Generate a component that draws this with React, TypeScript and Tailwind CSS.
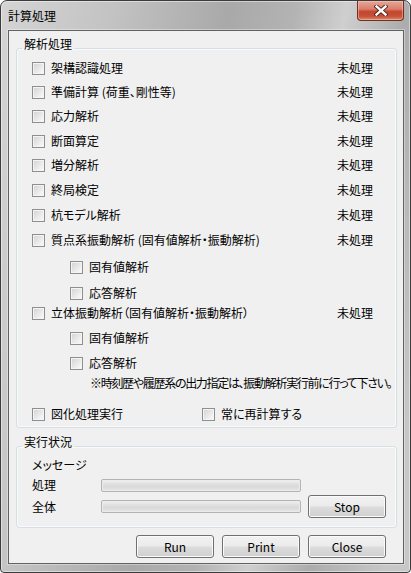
import React from 'react';

const font = "font-['Noto_Sans_CJK_JP','Noto_Sans',sans-serif] [font-feature-settings:'palt']";

function Check() {
  return (
    <span className="flex h-[13px] w-[13px] shrink-0 border border-[#8e8f8f] bg-[#f4f4f4] p-[1px]">
      <span className="flex-1 bg-[linear-gradient(135deg,#d6d6d6_0%,#e9e9e9_55%,#f9f9f9_100%)]" />
    </span>
  );
}

function Row({ label, status, mt, sub }: { label: string; status?: boolean; mt: string; sub?: boolean }) {
  return (
    <div className={`flex h-[16px] items-center pr-[23px] ${mt} ${sub ? 'pl-[53px]' : 'pl-[15px]'}`}>
      <Check />
      <span className="ml-[6px] whitespace-nowrap">{label}</span>
      {status && <span className="ml-auto">未処理</span>}
    </div>
  );
}

function Button({ label }: { label: string }) {
  return (
    <button className="h-[23px] w-[78px] shrink-0 rounded-[3px] border border-[#707070] bg-[linear-gradient(to_bottom,#f2f2f2_0%,#ebebeb_48%,#dddddd_52%,#cfcfcf_100%)] text-[12px] leading-[14px] text-black shadow-[inset_0_0_0_1px_#fbfbfb]">
      {label}
    </button>
  );
}

function Bar() {
  return (
    <div className="h-[13px] w-[200px] rounded-[2px] border border-[#b3b3b3] bg-[linear-gradient(to_bottom,#f4f4f4_0%,#e2e2e2_30%,#d9d9d9_60%,#e6e6e6_100%)] shadow-[inset_0_0_0_1px_#ececec]" />
  );
}

export default function App() {
  return (
    <div className={`${font} text-[12px] leading-[14px] text-black`}>
      <div className="flex h-[573px] w-[411px] flex-col rounded-t-[7px] rounded-b-[4px] border border-[#3c3c3c] bg-[linear-gradient(100deg,#d4d4d4_0%,#c3c3c3_22%,#a9a9a9_45%,#b3b3b3_58%,#cfcfcf_68%,#acacac_80%,#c7c7c7_95%)] shadow-[inset_0_0_0_1px_rgba(255,255,255,0.45)]">
        {/* Title bar */}
        <div className="flex h-[29px] shrink-0 items-start pl-[7px] pr-[6px]">
          <span className="mt-[8px]">計算処理</span>
          <div className="ml-auto flex h-[20px] w-[47px] items-center justify-center rounded-b-[4px] border border-t-0 border-[#6e2f25] bg-[linear-gradient(to_bottom,#e7a697_0%,#d9806d_42%,#c4462d_56%,#c6503a_80%,#dc8a66_100%)] shadow-[inset_0_0_0_1px_rgba(255,210,200,0.45)]">
            <svg width="14" height="11" viewBox="0 0 14 11">
              <path d="M2.5 1.5 L11.5 9.5 M11.5 1.5 L2.5 9.5" stroke="#4b1c14" strokeWidth="4.2" strokeLinecap="square" />
              <path d="M2.5 1.5 L11.5 9.5 M11.5 1.5 L2.5 9.5" stroke="#ffffff" strokeWidth="2.4" strokeLinecap="square" />
            </svg>
          </div>
        </div>

        {/* Client area */}
        <div className="mb-[8px] ml-[7px] mr-[6px] flex min-w-0 flex-1 flex-col border border-[#626262] bg-[#f0f0f0] pl-[7px] pr-[6px] shadow-[0_0_0_1px_rgba(255,255,255,0.35)]">
          <fieldset className="mt-[7px] min-w-0 rounded-[3px] border border-[#d5dfe5] pb-[5px] shadow-[inset_0_0_0_1px_#fafafa]">
            <legend className="ml-[5px] px-[2px] pb-[8px] leading-[12px]">解析処理</legend>
            <div className="flex flex-col pt-[2px]">
              <Row label="架構認識処理" status mt="mt-0" />
              <Row label="準備計算 (荷重、剛性等)" status mt="mt-[8px]" />
              <Row label="応力解析" status mt="mt-[8px]" />
              <Row label="断面算定" status mt="mt-[9px]" />
              <Row label="増分解析" status mt="mt-[8px]" />
              <Row label="終局検定" status mt="mt-[9px]" />
              <Row label="杭モデル解析" status mt="mt-[9px]" />
              <Row label="質点系振動解析 (固有値解析・振動解析)" status mt="mt-[9px]" />
              <Row label="固有値解析" sub mt="mt-[11px]" />
              <Row label="応答解析" sub mt="mt-[10px]" />
              <Row label="立体振動解析（固有値解析・振動解析）" status mt="mt-[4px]" />
              <Row label="固有値解析" sub mt="mt-[9px]" />
              <Row label="応答解析" sub mt="mt-[9px]" />
              <div className="mt-[4px] flex h-[16px] min-w-0 items-center whitespace-nowrap pl-[73px]">
                <span className="tracking-[-1.3px]">※時刻歴や履歴系の出力指定は、振動解析実行前に行って下さい。</span>
              </div>
              <div className="mt-[15px] flex h-[16px] items-center pl-[15px]">
                <div className="flex w-[170px] items-center">
                  <Check />
                  <span className="ml-[6px]">図化処理実行</span>
                </div>
                <Check />
                <span className="ml-[6px]">常に再計算する</span>
              </div>
            </div>
          </fieldset>

          <fieldset className="mt-[8px] min-w-0 rounded-[3px] border border-[#d5dfe5] pb-[9px] shadow-[inset_0_0_0_1px_#fafafa]">
            <legend className="ml-[5px] px-[2px] pb-[8px] leading-[12px]">実行状況</legend>
            <div className="flex flex-col pl-[15px] pr-[10px] pt-[1px]">
              <div className="flex h-[16px] items-center">メッセージ</div>
              <div className="mt-[4px] flex h-[16px] items-center">
                <span className="w-[69px]">処理</span>
                <Bar />
              </div>
              <div className="mt-[2px] flex h-[23px] items-center">
                <span className="w-[69px]">全体</span>
                <Bar />
                <div className="ml-auto">
                  <Button label="Stop" />
                </div>
              </div>
            </div>
          </fieldset>

          <div className="mr-[11px] mt-[7px] flex justify-end gap-[8px]">
            <Button label="Run" />
            <Button label="Print" />
            <Button label="Close" />
          </div>
        </div>
      </div>
    </div>
  );
}
